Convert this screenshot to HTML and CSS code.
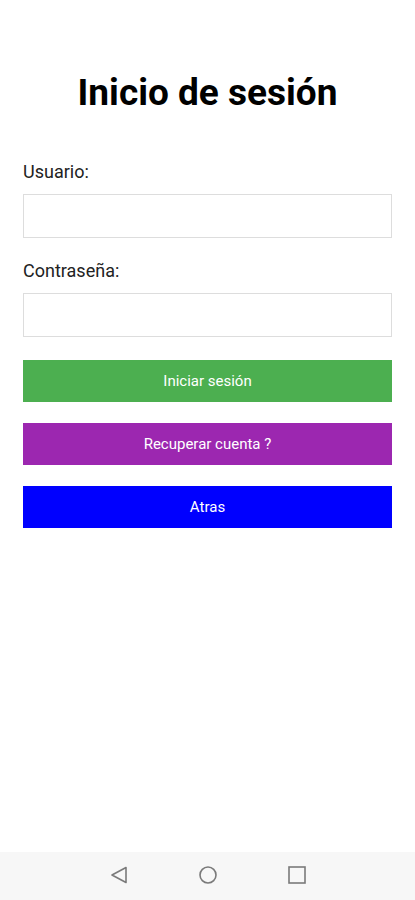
FILE: index.html
```html
<!DOCTYPE html>
<html lang="es">
<head>
  <meta charset="UTF-8" />
  <title>Inicio de sesión</title>
  <link rel="stylesheet" href="styles.css">
</head>
<body>
  <div class="screen">
    <main class="login">
      <h1>Inicio de sesión</h1>

      <label for="usuario">Usuario:</label>
      <input type="text" id="usuario">

      <label for="clave">Contraseña:</label>
      <input type="password" id="clave">

      <button class="btn btn-green">Iniciar sesión</button>
      <button class="btn btn-purple">Recuperar cuenta ?</button>
      <button class="btn btn-blue">Atras</button>
    </main>

    <nav class="navbar">
      <svg width="18" height="18" viewBox="0 0 18 18">
        <path d="M16 1.5 L2 9 L16 16.5 Z" fill="none" stroke="#7a7a7a" stroke-width="1.6" stroke-linejoin="round"/>
      </svg>
      <svg width="18" height="18" viewBox="0 0 18 18">
        <circle cx="9" cy="9" r="8" fill="none" stroke="#7a7a7a" stroke-width="1.6"/>
      </svg>
      <svg width="18" height="18" viewBox="0 0 18 18">
        <rect x="1" y="1" width="16" height="16" fill="none" stroke="#7a7a7a" stroke-width="1.6"/>
      </svg>
    </nav>
  </div>
</body>
</html>
```

FILE: styles.css
```css
html, body { margin: 0; padding: 0; background: #fff; }
body { font-family: Roboto, "Liberation Sans", sans-serif; color: #222; }

.screen { height: 900px; display: flex; flex-direction: column; }

.login { flex: 1; padding: 0 23px; display: flex; flex-direction: column; }
.login h1 {
  margin: 71px 0 46px;
  text-align: center;
  font-size: 37px;
  font-weight: bold;
  color: #000;
  line-height: 44px;
}
.login label { font-size: 18px; line-height: 21px; color: #222; }
.login input {
  height: 44px;
  margin: 12px 0 22px;
  padding: 0 8px;
  border: 1px solid #ddd;
  box-sizing: border-box;
  font-size: 16px;
  outline: none;
}

.btn {
  height: 42px;
  margin-bottom: 21px;
  border: none;
  color: #fff;
  font-family: Roboto, "Liberation Sans", sans-serif;
  font-size: 15px;
}
.login input + .btn { margin-top: 1px; }
.btn-green { background: #4caf50; }
.btn-purple { background: #9c27b0; }
.btn-blue { background: #0000ff; }

.navbar {
  height: 46px;
  background: #f7f7f7;
  display: flex;
  justify-content: center;
  align-items: center;
  gap: 71px;
  padding-bottom: 2px;
}
```
